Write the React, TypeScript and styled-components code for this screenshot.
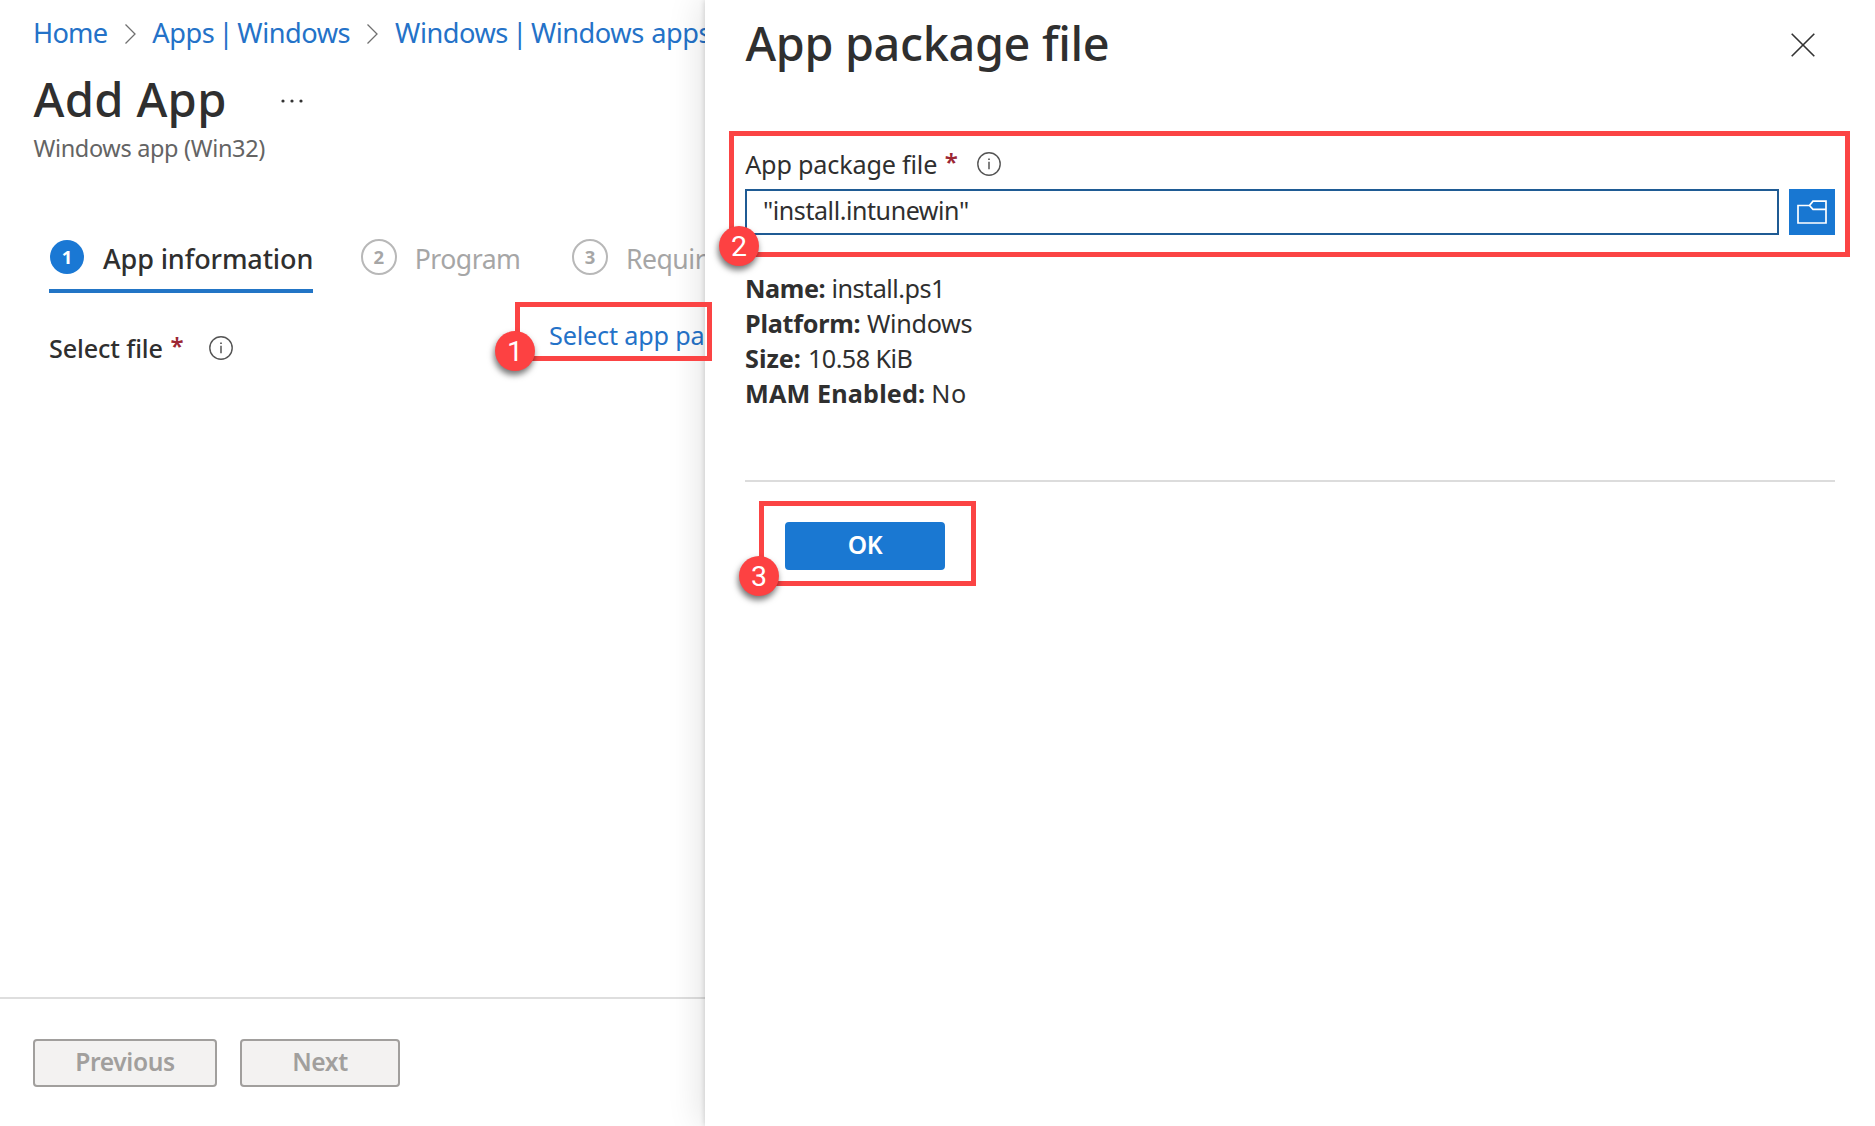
import React from 'react';
import styled, { createGlobalStyle, css } from 'styled-components';

const GlobalStyle = createGlobalStyle`
  * { box-sizing: border-box; }
  body {
    margin: 0;
    overflow: hidden;
    background: #fff;
    color: #2f2f2f;
    font-family: "Segoe UI", "Noto Sans", "Open Sans", sans-serif;
  }
  h1, h2, p { margin: 0; }
  button, input { font-family: inherit; color: inherit; }
  svg { display: block; flex: none; }
`;

const Page = styled.div`
  position: relative;
  display: flex;
  width: 1875px;
  height: 1126px;
  overflow: hidden;
`;

/* Left: wizard */

const Wizard = styled.main`
  display: flex;
  flex-direction: column;
  width: 705px;
  overflow: hidden;
  white-space: nowrap;
`;

const Breadcrumb = styled.nav`
  display: flex;
  align-items: center;
  height: 53px;
  padding: 13px 0 0 33px;
`;

const Crumb = styled.a<{ $tracking?: number }>`
  font-size: 27.2px;
  line-height: 40px;
  letter-spacing: ${(p) => p.$tracking ?? -0.48}px;
  word-spacing: -2.3px;
  color: #2472c8;
`;

const CrumbTail = styled.span`
  word-spacing: 1px;
`;

const Separator = styled.svg`
  margin: 2px 16.7px 0 17.3px;
`;

const TitleRow = styled.div`
  display: flex;
  align-items: center;
  gap: 54px;
  height: 60px;
  margin-top: 16px;
  padding-left: 33.5px;
`;

const Title = styled.h1`
  font-size: 47.2px;
  line-height: 60px;
  font-weight: 500;
  letter-spacing: 0.3px;
`;

const MoreDots = styled.svg`
  margin-top: 3px;
`;

const Subtitle = styled.p`
  margin-top: 3px;
  padding-left: 33.4px;
  font-size: 23.5px;
  line-height: 32px;
  letter-spacing: -0.34px;
  color: #646464;
`;

const Steps = styled.div`
  display: flex;
  align-items: flex-start;
  gap: 47.5px;
  margin-top: 74px;
  padding-left: 49px;
`;

const Step = styled.div<{ $active?: boolean }>`
  display: flex;
  align-items: flex-start;
  height: 55px;
  flex: none;
  gap: 18px;
  padding-right: 4px;
  color: #a6a6a6;
  ${(p) =>
    p.$active &&
    css`
      color: #2f2f2f;
      gap: 19px;
      padding: 0 0 0 1px;
      border-bottom: 4px solid #2275c6;
    `}
`;

const StepNumber = styled.span<{ $active?: boolean }>`
  display: flex;
  justify-content: center;
  width: 36px;
  height: 36px;
  margin-top: 0.5px;
  border: 2px solid #b8b8b8;
  border-radius: 50%;
  font-size: 18.5px;
  line-height: 31px;
  font-weight: 700;
  ${(p) =>
    p.$active &&
    css`
      width: 34px;
      height: 34px;
      margin-top: 1.5px;
      border: 0;
      line-height: 33px;
      background: #1a78d4;
      color: #fff;
    `}
`;

const StepLabel = styled.span<{ $active?: boolean }>`
  margin-top: 1px;
  font-size: ${(p) => (p.$active ? 27 : 26.6)}px;
  font-weight: ${(p) => (p.$active ? 500 : 400)};
  line-height: 40px;
  letter-spacing: ${(p) => (p.$active ? -0.12 : -0.5)}px;
`;

const FileRow = styled.div`
  display: grid;
  grid-template-columns: 500px auto;
  padding: 23px 0 0 49px;
`;

const FieldLabel = styled.label<{ $medium?: boolean }>`
  display: flex;
  align-items: flex-start;
  font-size: 25.2px;
  line-height: 36px;
  font-weight: ${(p) => (p.$medium ? 500 : 400)};
  letter-spacing: ${(p) => (p.$medium ? -0.12 : -0.19)}px;
  padding-top: ${(p) => (p.$medium ? 14 : 0)}px;
`;

const Required = styled.span`
  width: 13px;
  margin-left: 7.5px;
  font-size: 24px;
  line-height: 32px;
  font-weight: 600;
  color: #9c2633;
`;

const FileLink = styled.a`
  font-size: 25.2px;
  line-height: 36px;
  letter-spacing: -0.17px;
  padding-top: 1px;
  color: #2472c8;
`;

const Footer = styled.footer`
  display: flex;
  gap: 23px;
  height: 129px;
  margin-top: auto;
  padding: 40px 0 0 33px;
  border-top: 2px solid #dedede;
`;

const Button = styled.button<{ $width: number; $primary?: boolean }>`
  width: ${(p) => p.$width}px;
  height: 48px;
  padding: 0 0 3px;
  border: 2px solid #a19f9d;
  border-radius: 4px;
  background: #f3f2f1;
  color: #a19f9d;
  font-size: 24.6px;
  line-height: 34px;
  font-weight: 600;
  letter-spacing: -0.4px;
  ${(p) =>
    p.$primary &&
    css`
      border-color: #1a78d2;
      background: #1a78d2;
      color: #fff;
    `}
`;

/* Right: package file blade */

const Blade = styled.section`
  position: relative;
  display: flex;
  flex-direction: column;
  flex: 1;
  padding: 0 40px;
  background: #fff;
  box-shadow: -1px 0 5px rgba(0, 0, 0, 0.13), -5px 0 32px rgba(0, 0, 0, 0.11);
`;

const BladeHeader = styled.header`
  display: flex;
  justify-content: space-between;
  align-items: flex-start;
  padding: 13px 20.5px 0 0.5px;
  height: 146px;
`;

const BladeTitle = styled.h2`
  font-size: 46.8px;
  line-height: 60px;
  font-weight: 500;
  letter-spacing: -0.35px;
`;

const CloseIcon = styled.svg`
  margin-top: 20px;
`;

const PackageLabel = styled.div`
  display: flex;
  align-items: flex-start;
  height: 43px;
  padding-left: 0.2px;
`;

const Picker = styled.div`
  display: flex;
  gap: 10px;
  height: 46px;
`;

const FileInput = styled.input`
  flex: 1;
  min-width: 0;
  padding: 0 15px 4.5px 16px;
  border: 2px solid #1f5b94;
  border-radius: 0;
  outline: 0;
  background: #fff;
  font-size: 25px;
  letter-spacing: -0.42px;
`;

const BrowseButton = styled.button`
  display: flex;
  align-items: center;
  justify-content: center;
  width: 46px;
  height: 46px;
  padding: 0;
  border: 0;
  background: #1877d2;
`;

const Details = styled.div`
  height: 247px;
  padding: 35.5px 0 0 0;
  border-bottom: 2px solid #dcdcdc;
`;

const Detail = styled.p`
  display: flex;
  font-size: 25.2px;
  line-height: 35px;
`;

const DetailName = styled.strong<{ $tracking: number }>`
  font-weight: 700;
  letter-spacing: ${(p) => p.$tracking}px;
`;

const DetailValue = styled.span<{ $tracking: number; $gap: number }>`
  margin-left: ${(p) => p.$gap}px;
  letter-spacing: ${(p) => p.$tracking}px;
`;

const Actions = styled.div`
  padding: 40px;
`;

/* Numbered callouts drawn over the page */

const Highlight = styled.div<{ $x: number; $y: number; $w: number; $h: number }>`
  position: absolute;
  left: ${(p) => p.$x}px;
  top: ${(p) => p.$y}px;
  width: ${(p) => p.$w}px;
  height: ${(p) => p.$h}px;
  border: 5px solid #fb4444;
`;

const Marker = styled.span<{ $x: number; $y: number }>`
  position: absolute;
  left: ${(p) => p.$x}px;
  top: ${(p) => p.$y}px;
  width: 40px;
  height: 40px;
  border-radius: 50%;
  background: #fd4142;
  box-shadow: -1px 4px 6px rgba(0, 0, 0, 0.55);
  color: #fff;
  font: 400 28.5px/42px Roboto, "Liberation Sans", sans-serif;
  text-align: center;
`;

const InfoMark = styled.svg<{ $left: number; $top: number }>`
  margin-left: ${(p) => p.$left}px;
  margin-top: ${(p) => p.$top}px;
`;

const Info = ({ left, top }: { left: number; top: number }) => (
  <InfoMark $left={left} $top={top} width="24" height="24" viewBox="0 0 24 24" fill="none" stroke="#555">
    <circle cx="12" cy="12" r="11.2" strokeWidth="1.4" />
    <path d="M12 9.8v7.4" strokeWidth="1.5" />
    <path d="M12 6.4v1.7" strokeWidth="1.7" />
  </InfoMark>
);

const Chevron = () => (
  <Separator width="11" height="20" viewBox="0 0 11 20" fill="none" stroke="#707070" strokeWidth="1.3">
    <path d="M.5.5 10 10 .5 19.5" />
  </Separator>
);

const steps = [
  { label: 'App information', active: true },
  { label: 'Program' },
  { label: 'Requirements' },
];

const details = [
  { name: 'Name:', value: 'install.ps1', nt: -0.4, vt: -0.5, gap: 6.2 },
  { name: 'Platform:', value: 'Windows', nt: -0.25, vt: -0.3, gap: 6.6 },
  { name: 'Size:', value: '10.58 KiB', nt: 0, vt: -0.55, gap: 7 },
  { name: 'MAM Enabled:', value: 'No', nt: 0.15, vt: 0.5, gap: 6 },
];

const callouts = [
  { n: 1, x: 515, y: 302, w: 197, h: 59, mx: 495, my: 331 },
  { n: 2, x: 729, y: 131, w: 1121, h: 126, mx: 719, my: 226 },
  { n: 3, x: 759, y: 501, w: 217, h: 85, mx: 739, my: 556 },
];

export default function App() {
  return (
    <Page>
      <GlobalStyle />
      <Wizard>
        <Breadcrumb>
          <Crumb $tracking={-0.75}>Home</Crumb>
          <Chevron />
          <Crumb>Apps | Windows</Crumb>
          <Chevron />
          <Crumb>
            Windows | Windows<CrumbTail> apps</CrumbTail>
          </Crumb>
        </Breadcrumb>
        <TitleRow>
          <Title>Add App</Title>
          <MoreDots width="22" height="4" viewBox="0 0 22 4" fill="#333">
            <circle cx="2" cy="2" r="1.6" />
            <circle cx="11" cy="2" r="1.6" />
            <circle cx="20" cy="2" r="1.6" />
          </MoreDots>
        </TitleRow>
        <Subtitle>Windows app (Win32)</Subtitle>
        <Steps>
          {steps.map((s, i) => (
            <Step key={s.label} $active={s.active}>
              <StepNumber $active={s.active}>{i + 1}</StepNumber>
              <StepLabel $active={s.active}>{s.label}</StepLabel>
            </Step>
          ))}
        </Steps>
        <FileRow>
          <FieldLabel $medium>
            Select file<Required>*</Required>
            <Info left={25.5} top={6} />
          </FieldLabel>
          <FileLink>Select app package file</FileLink>
        </FileRow>
        <Footer>
          <Button $width={184} disabled>Previous</Button>
          <Button $width={160} disabled>Next</Button>
        </Footer>
      </Wizard>

      <Blade>
        <BladeHeader>
          <BladeTitle>App package file</BladeTitle>
          <CloseIcon width="24" height="24" viewBox="0 0 24 24" stroke="#333" strokeWidth="1.6">
            <path d="M.7.7 23.3 23.3M23.3.7.7 23.3" />
          </CloseIcon>
        </BladeHeader>
        <PackageLabel>
          <FieldLabel>
            App package file<Required>*</Required>
            <Info left={19.3} top={6} />
          </FieldLabel>
        </PackageLabel>
        <Picker>
          <FileInput readOnly value={'"install.intunewin"'} />
          <BrowseButton aria-label="Browse">
            <svg width="30" height="24" viewBox="0 0 30 24" fill="none" stroke="#fff" strokeWidth="1.7">
              <path d="M12.5 5.5H1V23h28V1.2H16l-3.5 4.3L16 9.3h13" />
            </svg>
          </BrowseButton>
        </Picker>
        <Details>
          {details.map((d) => (
            <Detail key={d.name}>
              <DetailName $tracking={d.nt}>{d.name}</DetailName>
              <DetailValue $tracking={d.vt} $gap={d.gap}>{d.value}</DetailValue>
            </Detail>
          ))}
        </Details>
        <Actions>
          <Button $width={160} $primary>OK</Button>
        </Actions>
      </Blade>

      {callouts.map((c) => (
        <React.Fragment key={c.n}>
          <Highlight $x={c.x} $y={c.y} $w={c.w} $h={c.h} />
          <Marker $x={c.mx} $y={c.my}>{c.n}</Marker>
        </React.Fragment>
      ))}
    </Page>
  );
}
